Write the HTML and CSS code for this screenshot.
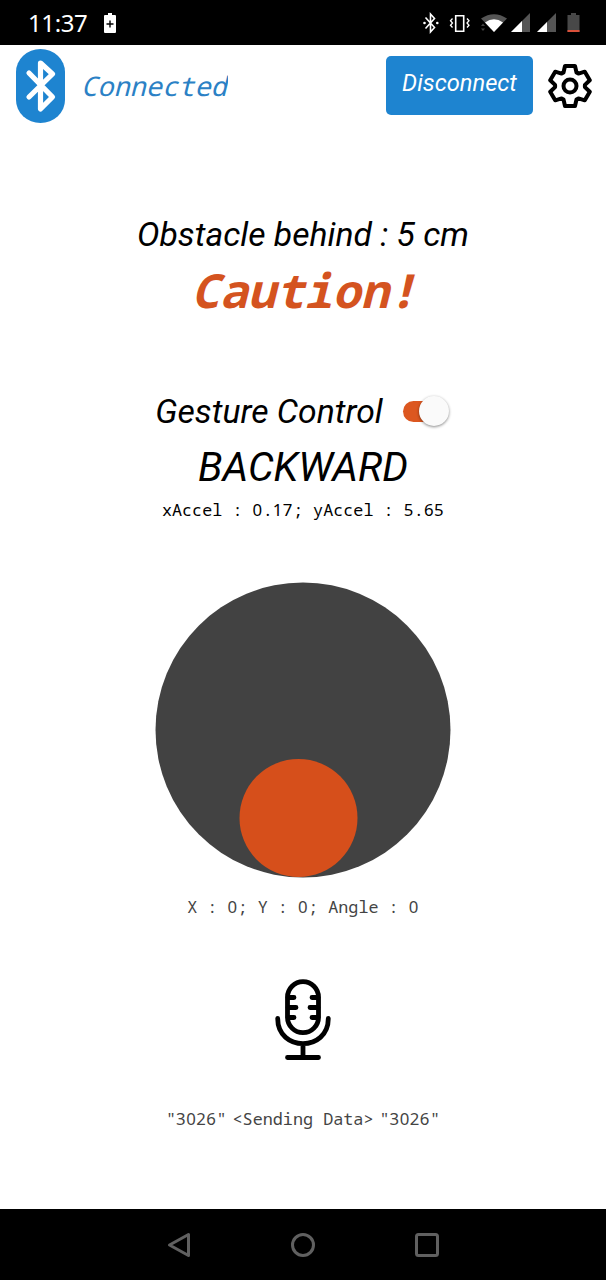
FILE: index.html
```html
<!DOCTYPE html>
<html lang="en">
<head>
<meta charset="utf-8">
<title>Robot Controller</title>
<link rel="stylesheet" href="styles.css">
</head>
<body>
<div class="screen">
  <div class="status">
    <span class="clock">11:37</span>
    <svg class="saver" width="12" height="22" viewBox="0 0 12 22"><path d="M4 1h4v2h3q1 0 1 1v16q0 1-1 1H1q-1 0-1-1V4q0-1 1-1h3z" fill="#fff"/><path d="M6 8.500v7M2.500 12h7" stroke="#000" stroke-width="1.400"/></svg>
    <svg class="signals" width="162" height="24" viewBox="0 0 162 24">
      <g fill="none" stroke="#fff" stroke-width="1.600"><path d="M5.500 6.500l9 10-4 4.500V3l4 4.500-9 10"/><path d="M35.700 4.700h8v15.500h-8z"/><path d="M32.500 7.500l-2 2.300 2 2.200-2 2.200 2 2.300M47 7.500l2 2.300-2 2.200 2 2.200-2 2.300" stroke-width="1.300"/></g>
      <circle cx="4.500" cy="12" r="1.300" fill="#fff"/><circle cx="17.300" cy="12" r="1.300" fill="#fff"/>
      <path d="M74 21L61 7.500Q74-1 87 7.500z" fill="#555"/><path d="M74 21l-9-9.500q9-6.500 18 0z" fill="#fff"/>
      <path d="M61 15l2-2.500 2 2.500zM61 17.500l2 2.500 2-2.500z" fill="#444"/>
      <path d="M91 21L110 2v19zM117 21L136 2v19z" fill="#555"/><path d="M91 21L102 10v11zM117 21L127 11v10z" fill="#fff"/>
      <path d="M151 2h5v2h3.500v17h-12V4h3.500z" fill="#484848"/><path d="M147.500 19h12v2h-12z" fill="#d9503a"/>
    </svg>
  </div>

  <div class="header">
    <svg class="bt" width="49" height="74" viewBox="0 0 49 74"><rect width="49" height="74" rx="24.500" ry="23" fill="#1e84d0"/><path d="M13 24l23.500 24L24.500 60V14L36.500 25 13 48" fill="none" stroke="#fff" stroke-width="5.200" stroke-linecap="round" stroke-linejoin="round"/></svg>
    <span class="state">Connected</span>
    <button class="disconnect">Disconnect</button>
    <svg class="gear" width="44" height="44" viewBox="0 0 44 44" fill="none" stroke="#000" stroke-width="4" stroke-linejoin="round"><path d="M17 2h10l1.500 6.500 1.900 1.100 6.400-1.900 5 8.600-4.900 4.600v2.200l4.900 4.600-5 8.600-6.400-1.900-1.900 1.100L27 42H17l-1.500-6.500-1.900-1.100-6.400 1.900-5-8.600 4.900-4.600v-2.200l-4.900-4.600 5-8.600 6.400 1.900 1.900-1.100z"/><circle cx="22" cy="22" r="6.500"/></svg>
  </div>

  <div class="obstacle">Obstacle behind : 5 cm</div>
  <div class="caution">Caution!</div>

  <div class="gesture"><span class="gesture-label">Gesture Control</span><span class="switch"><span class="thumb"></span></span></div>
  <div class="direction">BACKWARD</div>
  <div class="mono accel">xAccel : <span class="n">0</span>.<span class="n">17</span>; yAccel : <span class="n">5</span>.<span class="n">65</span></div>

  <svg class="pad" width="296" height="296" viewBox="0 0 296 296"><circle cx="148" cy="148" r="147.500" fill="#424242"/><circle cx="143.500" cy="236" r="59" fill="#d64f1b"/></svg>
  <div class="mono coords">X : <span class="n">0</span>; Y : <span class="n">0</span>; Angle : <span class="n">0</span></div>

  <svg class="mic" width="56" height="82" viewBox="0 0 56 82" fill="none" stroke="#000" stroke-width="4.800" stroke-linecap="round"><rect x="12.500" y="2.700" width="31" height="51" rx="15.500"/><path d="M2.700 39.500C2.700 73 53.300 73 53.300 39.500M28 65v13M12.500 78.500h31M13 18.500h6M13 28.500h8M13 38.500h6M43 18.500h-6M43 28.500h-8M43 38.500h-6"/></svg>
  <div class="mono sent"><span>"<span class="n">3026</span>"</span><span>&lt;Sending Data&gt;</span><span>"<span class="n">3026</span>"</span></div>

  <div class="nav">
    <svg width="24" height="26" viewBox="0 0 24 26"><path d="M2.500 13L21.500 2.500v21z"/></svg>
    <svg width="24" height="26" viewBox="0 0 24 26"><circle cx="12" cy="13" r="10.500"/></svg>
    <svg width="24" height="26" viewBox="0 0 24 26"><rect x="1.500" y="2.500" width="21" height="21" rx="2"/></svg>
  </div>
</div>
</body>
</html>
```
FILE: styles.css
```css
* { box-sizing: border-box; }
body { margin: 0; background: #fff; color: #000; font-family: Roboto, "Liberation Sans", sans-serif; }
svg { display: block; flex: none; }
.screen { display: flex; flex-direction: column; align-items: center; width: 606px; height: 1280px; overflow: hidden; white-space: nowrap; }
.status { width: 100%; height: 45px; background: #000; display: flex; align-items: center; padding: 0 24px 0 28px; flex: none; }
.clock { width: 76px; color: #fff; font: 24px/45px "Noto Sans", sans-serif; letter-spacing: -.4px; }
.signals { margin-left: auto; }
.header { width: 100%; height: 81px; display: flex; align-items: center; padding: 0 14px 0 16px; flex: none; }
.state { width: 147px; margin-left: 16px; overflow: hidden; color: #2b81c5; font: italic 27px/44px "Droid Sans Mono", "Noto Sans Mono", "DejaVu Sans Mono", monospace; }
.disconnect { width: 147px; height: 59px; margin: 0 15px 0 auto; padding: 0 0 5px; border: 0; border-radius: 5px; background: #1e84d0; color: #fff; font: italic 23.7px Roboto, sans-serif; }
.obstacle { margin-top: 88px; font-size: 33.7px; font-style: italic; line-height: 42px; }
.caution { height: 66px; padding-left: 2px; color: #d4531f; font: italic bold 47px/69px "Droid Sans Mono", "Noto Sans Mono", "DejaVu Sans Mono", monospace; }
.gesture { display: flex; align-items: center; height: 44px; margin: 67px 2px 0 0; gap: 20px; font-size: 33.7px; font-style: italic; }
.switch { width: 46px; height: 21px; display: flex; align-items: center; justify-content: flex-end; border-radius: 11px; background: linear-gradient(90deg, #dc5720 32px, transparent 32px); }
.thumb { width: 30px; height: 30px; border-radius: 50%; background: #fafafa; box-shadow: 0 1px 3px #0007; }
.direction { height: 65px; font-size: 40.6px; font-style: italic; line-height: 69px; }
.mono { font: 16.8px/24px "Droid Sans Mono", "Noto Sans Mono", "DejaVu Sans Mono", monospace; white-space: pre; }
.n { font-family: "Noto Sans", sans-serif; letter-spacing: .5px; }
.pad { margin-top: 60px; }
.coords { margin-top: 17px; color: #444; }
.mic { margin-top: 60px; }
.sent { display: flex; gap: 6px; margin-top: 46px; color: #444; }
.nav { width: 100%; height: 71px; margin-top: auto; background: #000; display: flex; justify-content: center; align-items: center; gap: 100px; flex: none; }
.nav svg { fill: none; stroke: #606060; stroke-width: 3; stroke-linejoin: round; }
```
